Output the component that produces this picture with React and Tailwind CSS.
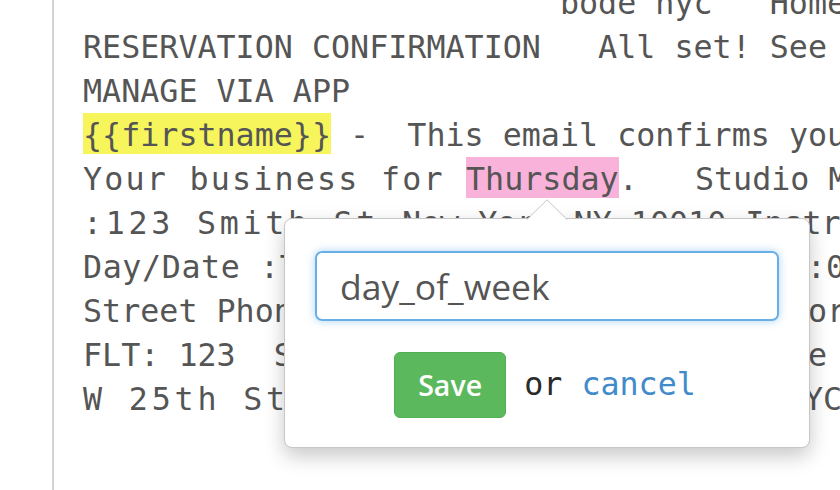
import React from "react";

const mono = "font-['DejaVu_Sans_Mono',monospace]";

export default function App() {
  return (
    <div className="relative w-[840px] h-[490px] overflow-hidden bg-white">
      <div className="ml-[52px] h-full flex flex-col border-l-2 border-[#d3d3d3] pl-[29px]">
        <div
          className={`${mono} text-[31.7px] leading-[44px] text-[#555] mt-[-19px] whitespace-pre`}
        >
          <div>{"                         bode nyc   Home Studio"}</div>
          <div>RESERVATION CONFIRMATION   All set! See you soon.</div>
          <div>MANAGE VIA APP</div>
          <div>
            <span className="bg-[#f6f65c] pt-[4px] pb-[1px]">{"{{firstname}}"}</span>
            {" -  This email confirms your reservation."}
          </div>
          <div>
            <span className="tracking-[2.2px]">{"Your business for "}</span>
            <span className="bg-[#f9b2d9] pt-[4px] pb-[1px]">Thursday</span>
            {".   Studio Manager"}
          </div>
          <div>
            <span className="tracking-[3.7px]">{":123 Smith St "}</span>
            {"New York NY 10010 Instructor"}
          </div>
          <div>
            <span className="tracking-[0.6px]">{"Day/Date :Thursday, January 12"}</span>
            {"  Time :07:00 AM"}
          </div>
          <div>{"Street Phone :(212) 555-0123  Instructor"}</div>
          <div>{"FLT: 123  Smith Street, Floor 22  Suite 4B"}</div>
          <div>
            <span className="tracking-[3.8px]">{"W 25th St"}</span>
            {"reet, New York, NY 10001  NYC"}
          </div>
        </div>
      </div>

      <div className="absolute left-[284px] top-[218px] w-[526px] h-[230px] bg-white border border-[#c6c6c6] rounded-[8px] shadow-[0_8px_20px_rgba(0,0,0,0.22)]">
        <svg
          className="absolute left-1/2 -translate-x-1/2 top-[-20px]"
          width="42"
          height="21"
          viewBox="0 0 42 21"
        >
          <path d="M0.5 21 L21 0.8 L41.5 21" fill="#ffffff" stroke="#c6c6c6" strokeWidth="1" />
        </svg>
        <div className="flex flex-col px-[30px] pt-[32px]">
          <input
            readOnly
            value="day_of_week"
            className="h-[70px] w-full border-2 border-[#6aaee6] rounded-[7px] shadow-[0_0_9px_rgba(102,175,233,0.55)] px-[23px] text-[35.5px] font-['Open_Sans',sans-serif] text-[#555] outline-none"
          />
          <div className="flex items-center justify-center mt-[31px] pr-[4px]">
            <button className="w-[112px] h-[66px] bg-[#5cb85c] border border-[#52b052] rounded-[6px] text-white text-[28.5px] font-semibold font-['Open_Sans',sans-serif] flex items-center justify-center">
              Save
            </button>
            <div className={`${mono} text-[31.7px] ml-[18px] text-[#2a2a2a] whitespace-pre`}>
              {"or "}
              <span className="text-[#428bca]">cancel</span>
            </div>
          </div>
        </div>
      </div>
    </div>
  );
}
